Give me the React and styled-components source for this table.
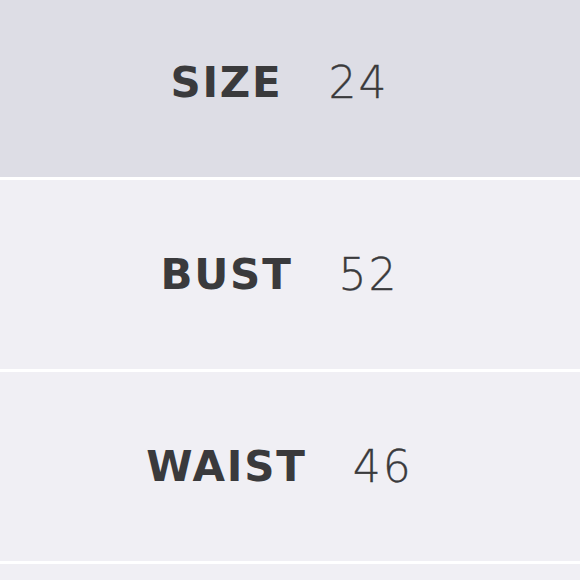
import React from "react";
import styled, { createGlobalStyle } from "styled-components";

const Global = createGlobalStyle`
  html, body { margin: 0; padding: 0; background: #ffffff; }
  body { width: 580px; height: 580px; overflow: hidden; }
`;

const Table = styled.div`
  display: flex;
  flex-direction: column;
  gap: 3px;
  margin-top: -12px;
  background: #ffffff;
`;

const Row = styled.div`
  height: 189px;
  display: flex;
  align-items: center;
  justify-content: center;
  gap: 46px;
  padding-right: 21px;
  background: ${(p) => (p.$head ? "#dddde5" : "#f0eff4")};
  color: #3a3a3c;
`;

const Label = styled.span`
  font-family: "DejaVu Sans", "Lato", sans-serif;
  font-weight: 700;
  font-size: 42px;
  letter-spacing: 1.8px;
  line-height: 1;
`;

const Value = styled.span`
  font-family: "DejaVu Sans", "Lato", sans-serif;
  font-weight: 200;
  font-size: 44px;
  letter-spacing: 2px;
  line-height: 1;
  -webkit-text-stroke: 0.3px #3a3a3c;
`;

const rows = [
  { label: "SIZE", value: "24", head: true },
  { label: "BUST", value: "52" },
  { label: "WAIST", value: "46" },
  { label: "", value: "" },
];

export default function App() {
  return (
    <>
      <Global />
      <Table>
        {rows.map((r, i) => (
          <Row key={i} $head={r.head}>
            {r.label && <Label>{r.label}</Label>}
            {r.value && <Value>{r.value}</Value>}
          </Row>
        ))}
      </Table>
    </>
  );
}
